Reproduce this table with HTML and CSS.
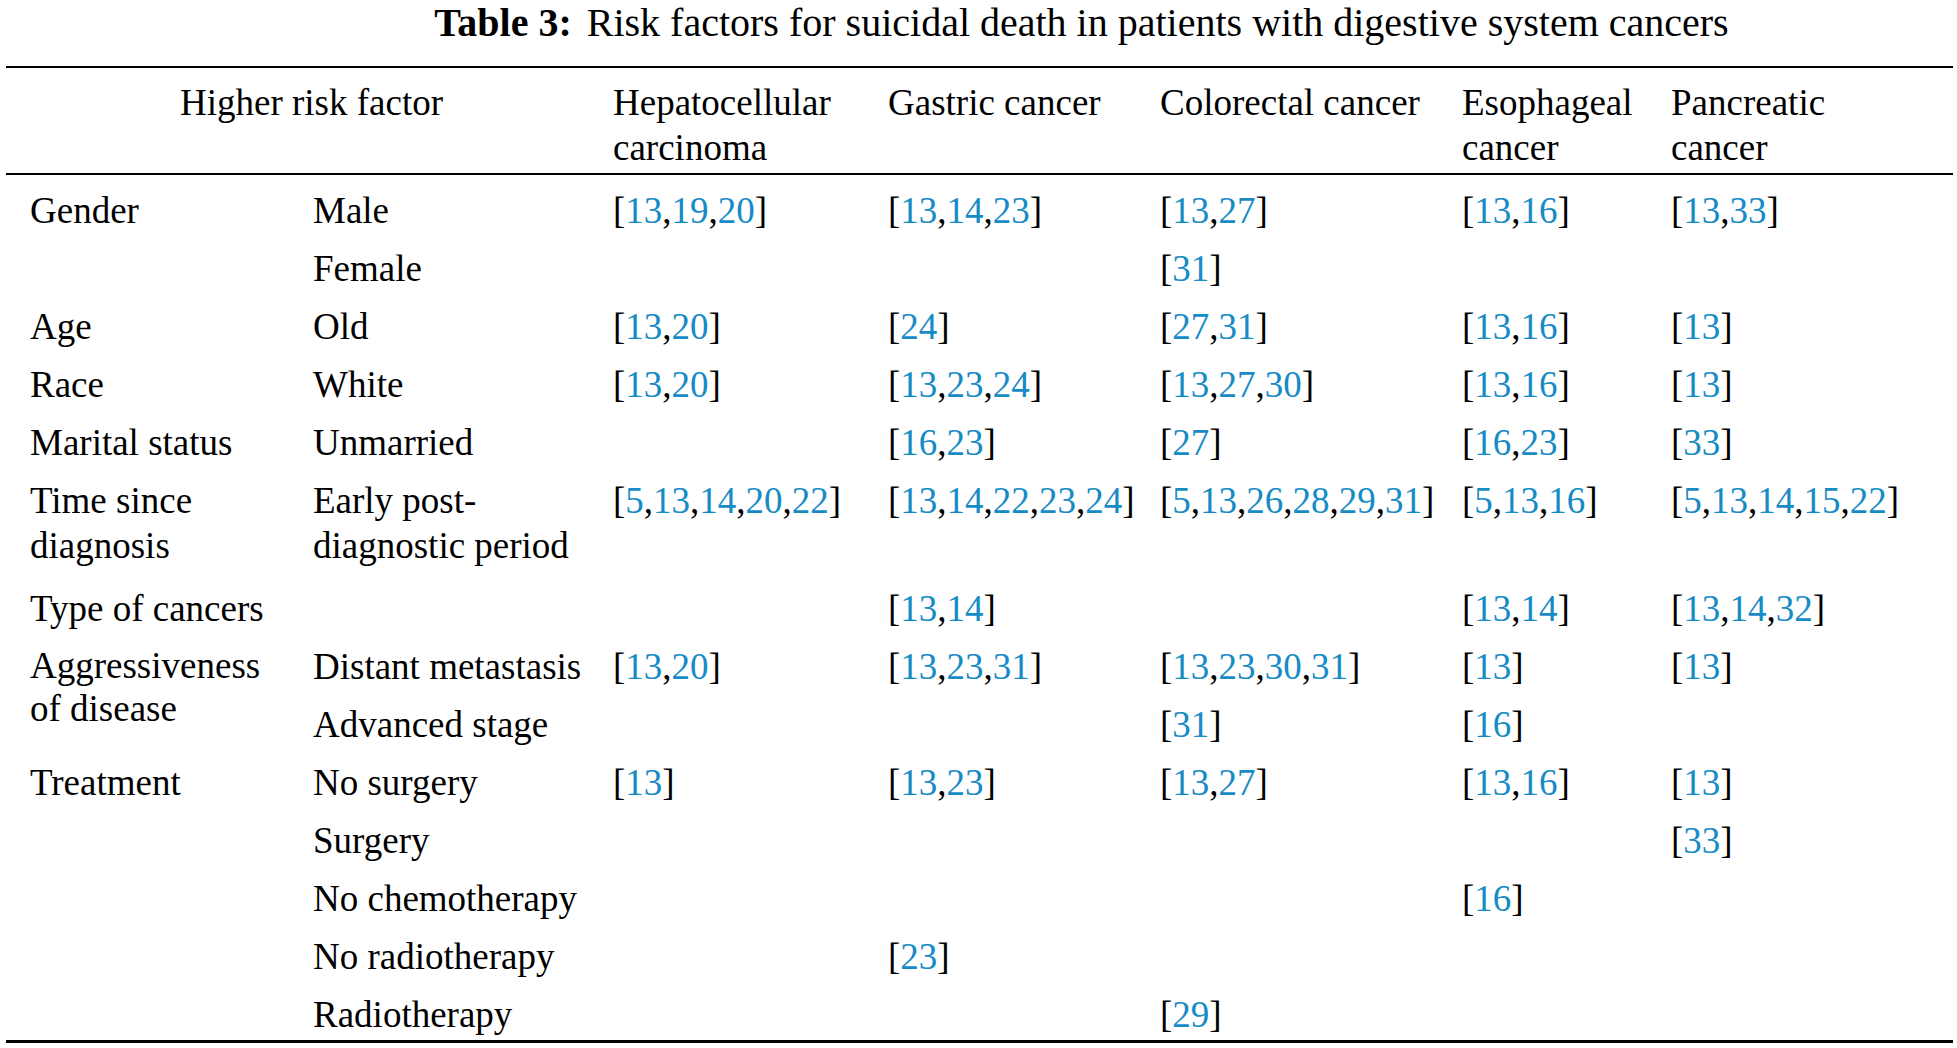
FILE: index.html
```html
<!DOCTYPE html>
<html lang="en">
<head>
<meta charset="utf-8">
<title>Table 3</title>
<link rel="stylesheet" href="styles.css">
</head>
<body>
<div class="page">
  <h1 class="caption"><span class="label">Table 3:</span> Risk factors for suicidal death in patients with digestive system cancers</h1>
  <table class="risk">
    <colgroup>
      <col class="c1"><col class="c2"><col class="c3"><col class="c4"><col class="c5"><col class="c6"><col class="c7">
    </colgroup>
    <thead>
      <tr>
        <th colspan="2" class="center">Higher risk factor</th>
        <th>Hepatocellular carcinoma</th>
        <th>Gastric cancer</th>
        <th>Colorectal cancer</th>
        <th>Esophageal cancer</th>
        <th class="last">Pancreatic cancer</th>
      </tr>
    </thead>
    <tbody>
      <tr class="first">
        <td rowspan="2" class="factor">Gender</td>
        <td class="sub">Male</td>
        <td><span class="ref">[<a>13</a>,<a>19</a>,<a>20</a>]</span></td>
        <td><span class="ref">[<a>13</a>,<a>14</a>,<a>23</a>]</span></td>
        <td><span class="ref">[<a>13</a>,<a>27</a>]</span></td>
        <td><span class="ref">[<a>13</a>,<a>16</a>]</span></td>
        <td class="last"><span class="ref">[<a>13</a>,<a>33</a>]</span></td>
      </tr>
      <tr>
        <td class="sub">Female</td>
        <td></td>
        <td></td>
        <td><span class="ref">[<a>31</a>]</span></td>
        <td></td>
        <td class="last"></td>
      </tr>
      <tr>
        <td class="factor">Age</td>
        <td class="sub">Old</td>
        <td><span class="ref">[<a>13</a>,<a>20</a>]</span></td>
        <td><span class="ref">[<a>24</a>]</span></td>
        <td><span class="ref">[<a>27</a>,<a>31</a>]</span></td>
        <td><span class="ref">[<a>13</a>,<a>16</a>]</span></td>
        <td class="last"><span class="ref">[<a>13</a>]</span></td>
      </tr>
      <tr>
        <td class="factor">Race</td>
        <td class="sub">White</td>
        <td><span class="ref">[<a>13</a>,<a>20</a>]</span></td>
        <td><span class="ref">[<a>13</a>,<a>23</a>,<a>24</a>]</span></td>
        <td><span class="ref">[<a>13</a>,<a>27</a>,<a>30</a>]</span></td>
        <td><span class="ref">[<a>13</a>,<a>16</a>]</span></td>
        <td class="last"><span class="ref">[<a>13</a>]</span></td>
      </tr>
      <tr>
        <td class="factor">Marital status</td>
        <td class="sub">Unmarried</td>
        <td></td>
        <td><span class="ref">[<a>16</a>,<a>23</a>]</span></td>
        <td><span class="ref">[<a>27</a>]</span></td>
        <td><span class="ref">[<a>16</a>,<a>23</a>]</span></td>
        <td class="last"><span class="ref">[<a>33</a>]</span></td>
      </tr>
      <tr class="tall">
        <td class="factor">Time since diagnosis</td>
        <td class="sub">Early post-diagnostic period</td>
        <td><span class="ref">[<a>5</a>,<a>13</a>,<a>14</a>,<a>20</a>,<a>22</a>]</span></td>
        <td><span class="ref">[<a>13</a>,<a>14</a>,<a>22</a>,<a>23</a>,<a>24</a>]</span></td>
        <td><span class="ref">[<a>5</a>,<a>13</a>,<a>26</a>,<a>28</a>,<a>29</a>,<a>31</a>]</span></td>
        <td><span class="ref">[<a>5</a>,<a>13</a>,<a>16</a>]</span></td>
        <td class="last"><span class="ref">[<a>5</a>,<a>13</a>,<a>14</a>,<a>15</a>,<a>22</a>]</span></td>
      </tr>
      <tr>
        <td class="factor">Type of cancers</td>
        <td class="sub"></td>
        <td></td>
        <td><span class="ref">[<a>13</a>,<a>14</a>]</span></td>
        <td></td>
        <td><span class="ref">[<a>13</a>,<a>14</a>]</span></td>
        <td class="last"><span class="ref">[<a>13</a>,<a>14</a>,<a>32</a>]</span></td>
      </tr>
      <tr>
        <td rowspan="2" class="factor tight">Aggressiveness of disease</td>
        <td class="sub">Distant metastasis</td>
        <td><span class="ref">[<a>13</a>,<a>20</a>]</span></td>
        <td><span class="ref">[<a>13</a>,<a>23</a>,<a>31</a>]</span></td>
        <td><span class="ref">[<a>13</a>,<a>23</a>,<a>30</a>,<a>31</a>]</span></td>
        <td><span class="ref">[<a>13</a>]</span></td>
        <td class="last"><span class="ref">[<a>13</a>]</span></td>
      </tr>
      <tr>
        <td class="sub">Advanced stage</td>
        <td></td>
        <td></td>
        <td><span class="ref">[<a>31</a>]</span></td>
        <td><span class="ref">[<a>16</a>]</span></td>
        <td class="last"></td>
      </tr>
      <tr>
        <td rowspan="5" class="factor">Treatment</td>
        <td class="sub">No surgery</td>
        <td><span class="ref">[<a>13</a>]</span></td>
        <td><span class="ref">[<a>13</a>,<a>23</a>]</span></td>
        <td><span class="ref">[<a>13</a>,<a>27</a>]</span></td>
        <td><span class="ref">[<a>13</a>,<a>16</a>]</span></td>
        <td class="last"><span class="ref">[<a>13</a>]</span></td>
      </tr>
      <tr>
        <td class="sub">Surgery</td>
        <td></td>
        <td></td>
        <td></td>
        <td></td>
        <td class="last"><span class="ref">[<a>33</a>]</span></td>
      </tr>
      <tr>
        <td class="sub">No chemotherapy</td>
        <td></td>
        <td></td>
        <td></td>
        <td><span class="ref">[<a>16</a>]</span></td>
        <td class="last"></td>
      </tr>
      <tr>
        <td class="sub">No radiotherapy</td>
        <td></td>
        <td><span class="ref">[<a>23</a>]</span></td>
        <td></td>
        <td></td>
        <td class="last"></td>
      </tr>
      <tr>
        <td class="sub">Radiotherapy</td>
        <td></td>
        <td></td>
        <td><span class="ref">[<a>29</a>]</span></td>
        <td></td>
        <td class="last"></td>
      </tr>
    </tbody>
  </table>
</div>
</body>
</html>
```

FILE: styles.css
```css
html, body {
  margin: 0;
  padding: 0;
  background: #ffffff;
}

body {
  font-family: "Liberation Serif", "Times New Roman", serif;
  color: #000000;
}

.page {
  width: 1957px;
  height: 1048px;
  overflow: hidden;
}

.caption {
  margin: 0 0 20px 0;
  padding: 0 0 0 206px;
  font-size: 40px;
  font-weight: normal;
  line-height: 46px;
  text-align: center;
  white-space: nowrap;
}

.caption .label {
  font-weight: bold;
  margin-right: 5px;
}

.risk {
  margin-left: 6px;
  width: 1947px;
  table-layout: fixed;
  border-collapse: collapse;
  border-spacing: 0;
  font-size: 37px;
  line-height: 45px;
  border-top: 2px solid #000;
  border-bottom: 3px solid #000;
}

.c1 { width: 307px; }
.c2 { width: 300px; }
.c3 { width: 275px; }
.c4 { width: 272px; }
.c5 { width: 302px; }
.c6 { width: 209px; }
.c7 { width: 282px; }

.risk th {
  font-weight: normal;
  text-align: left;
  vertical-align: top;
  line-height: 45px;
  padding: 12px 0 3px 0;
  border-bottom: 2px solid #000;
}

.risk th.center {
  text-align: center;
  padding-left: 24px;
  padding-right: 20px;
}

.risk td {
  text-align: left;
  vertical-align: top;
  padding: 10px 0 3px 0;
}

.risk tr.first td {
  padding-top: 13px;
}

.risk tr.tall td {
  padding-bottom: 8px;
}

.risk td.factor {
  padding-left: 24px;
  padding-right: 30px;
}

.risk td.tight {
  line-height: 43px;
}

.risk td.sub {
  padding-right: 16px;
}

.risk .last {
  padding-right: 50px;
}

.ref {
  white-space: nowrap;
}

.ref a {
  color: #168bc5;
  text-decoration: none;
}
```
